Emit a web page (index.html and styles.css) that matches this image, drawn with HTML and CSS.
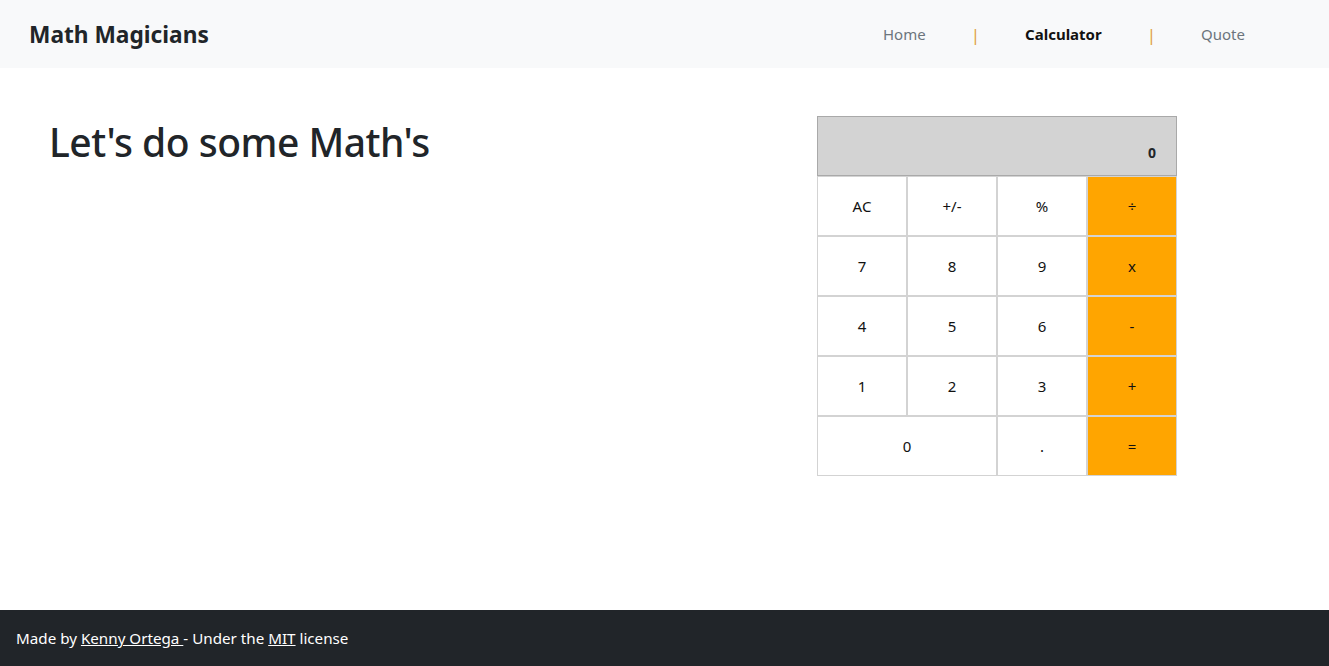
FILE: index.html
```html
<!DOCTYPE html>
<html lang="en">
<head>
<meta charset="utf-8">
<title>Math Magicians</title>
<link rel="stylesheet" href="styles.css">
</head>
<body>
<div class="page">
  <header class="navbar">
    <h1 class="brand">Math Magicians</h1>
    <nav class="nav">
      <a class="nav-link" href="#">Home</a>
      <span class="sep">|</span>
      <a class="nav-link active" href="#">Calculator</a>
      <span class="sep">|</span>
      <a class="nav-link" href="#">Quote</a>
    </nav>
  </header>
  <main class="main">
    <h2 class="title">Let's do some Math's</h2>
    <div class="calc">
      <div class="display">0</div>
      <div class="keys">
        <button class="key">AC</button>
        <button class="key">+/-</button>
        <button class="key">%</button>
        <button class="key op">÷</button>
        <button class="key">7</button>
        <button class="key">8</button>
        <button class="key">9</button>
        <button class="key op">x</button>
        <button class="key">4</button>
        <button class="key">5</button>
        <button class="key">6</button>
        <button class="key op">-</button>
        <button class="key">1</button>
        <button class="key">2</button>
        <button class="key">3</button>
        <button class="key op">+</button>
        <button class="key wide">0</button>
        <button class="key">.</button>
        <button class="key op">=</button>
      </div>
    </div>
  </main>
  <footer class="footer">
    <p>Made by <a href="#">Kenny Ortega </a> - Under the <a href="#">MIT</a> license</p>
  </footer>
</div>
</body>
</html>
```

FILE: styles.css
```css
* { box-sizing: border-box; }
html, body { margin: 0; padding: 0; }
body {
  font-family: "Noto Sans", "Open Sans", "DejaVu Sans", sans-serif;
  color: #212529;
  background: #fff;
}
.page {
  min-height: 666px;
  display: flex;
  flex-direction: column;
}
.navbar {
  height: 68px;
  background: #f8f9fa;
  display: flex;
  align-items: center;
  justify-content: space-between;
  padding: 0 84px 0 29px;
}
.brand {
  margin: 0;
  font-size: 22.7px;
  font-weight: 700;
  letter-spacing: 0;
  color: #212529;
}
.nav {
  display: flex;
  align-items: center;
  gap: 45px;
  font-size: 15px;
}
.nav-link {
  color: #6c757d;
  text-decoration: none;
}
.nav-link.active {
  color: #111;
  font-weight: 700;
}
.sep {
  color: #e0a040;
  font-size: 17px;
}
.main {
  flex: 1;
  display: flex;
  justify-content: space-between;
  align-items: flex-start;
  padding: 41px 152px 0 49px;
}
.title {
  margin: 6px 0 0;
  font-size: 39px;
  font-weight: 500;
  letter-spacing: -0.5px;
  color: #212529;
}
.calc {
  width: 360px;
  margin-top: 7px;
}
.display {
  height: 60px;
  background: #d3d3d3;
  border: 1px solid #a9a9a9;
  display: flex;
  align-items: flex-end;
  justify-content: flex-end;
  padding: 0 20px 13px 0;
  font-size: 14px;
  font-weight: 700;
  color: #212529;
}
.keys {
  display: grid;
  grid-template-columns: repeat(4, 90px);
  grid-auto-rows: 60px;
}
.key {
  border: 1px solid #d3d3d3;
  background: #fff;
  font-family: "Noto Sans", "Open Sans", sans-serif;
  font-size: 15px;
  color: #111;
  padding: 0;
  margin: 0;
}
.key.op { background: #ffa500; }
.key.wide { grid-column: span 2; }
.footer {
  height: 56px;
  background: #212529;
  color: #fff;
  display: flex;
  align-items: center;
  padding: 0 16px;
  font-size: 15.2px;
}
.footer p { margin: 0; }
.footer a { color: #fff; text-decoration: underline; }
```
